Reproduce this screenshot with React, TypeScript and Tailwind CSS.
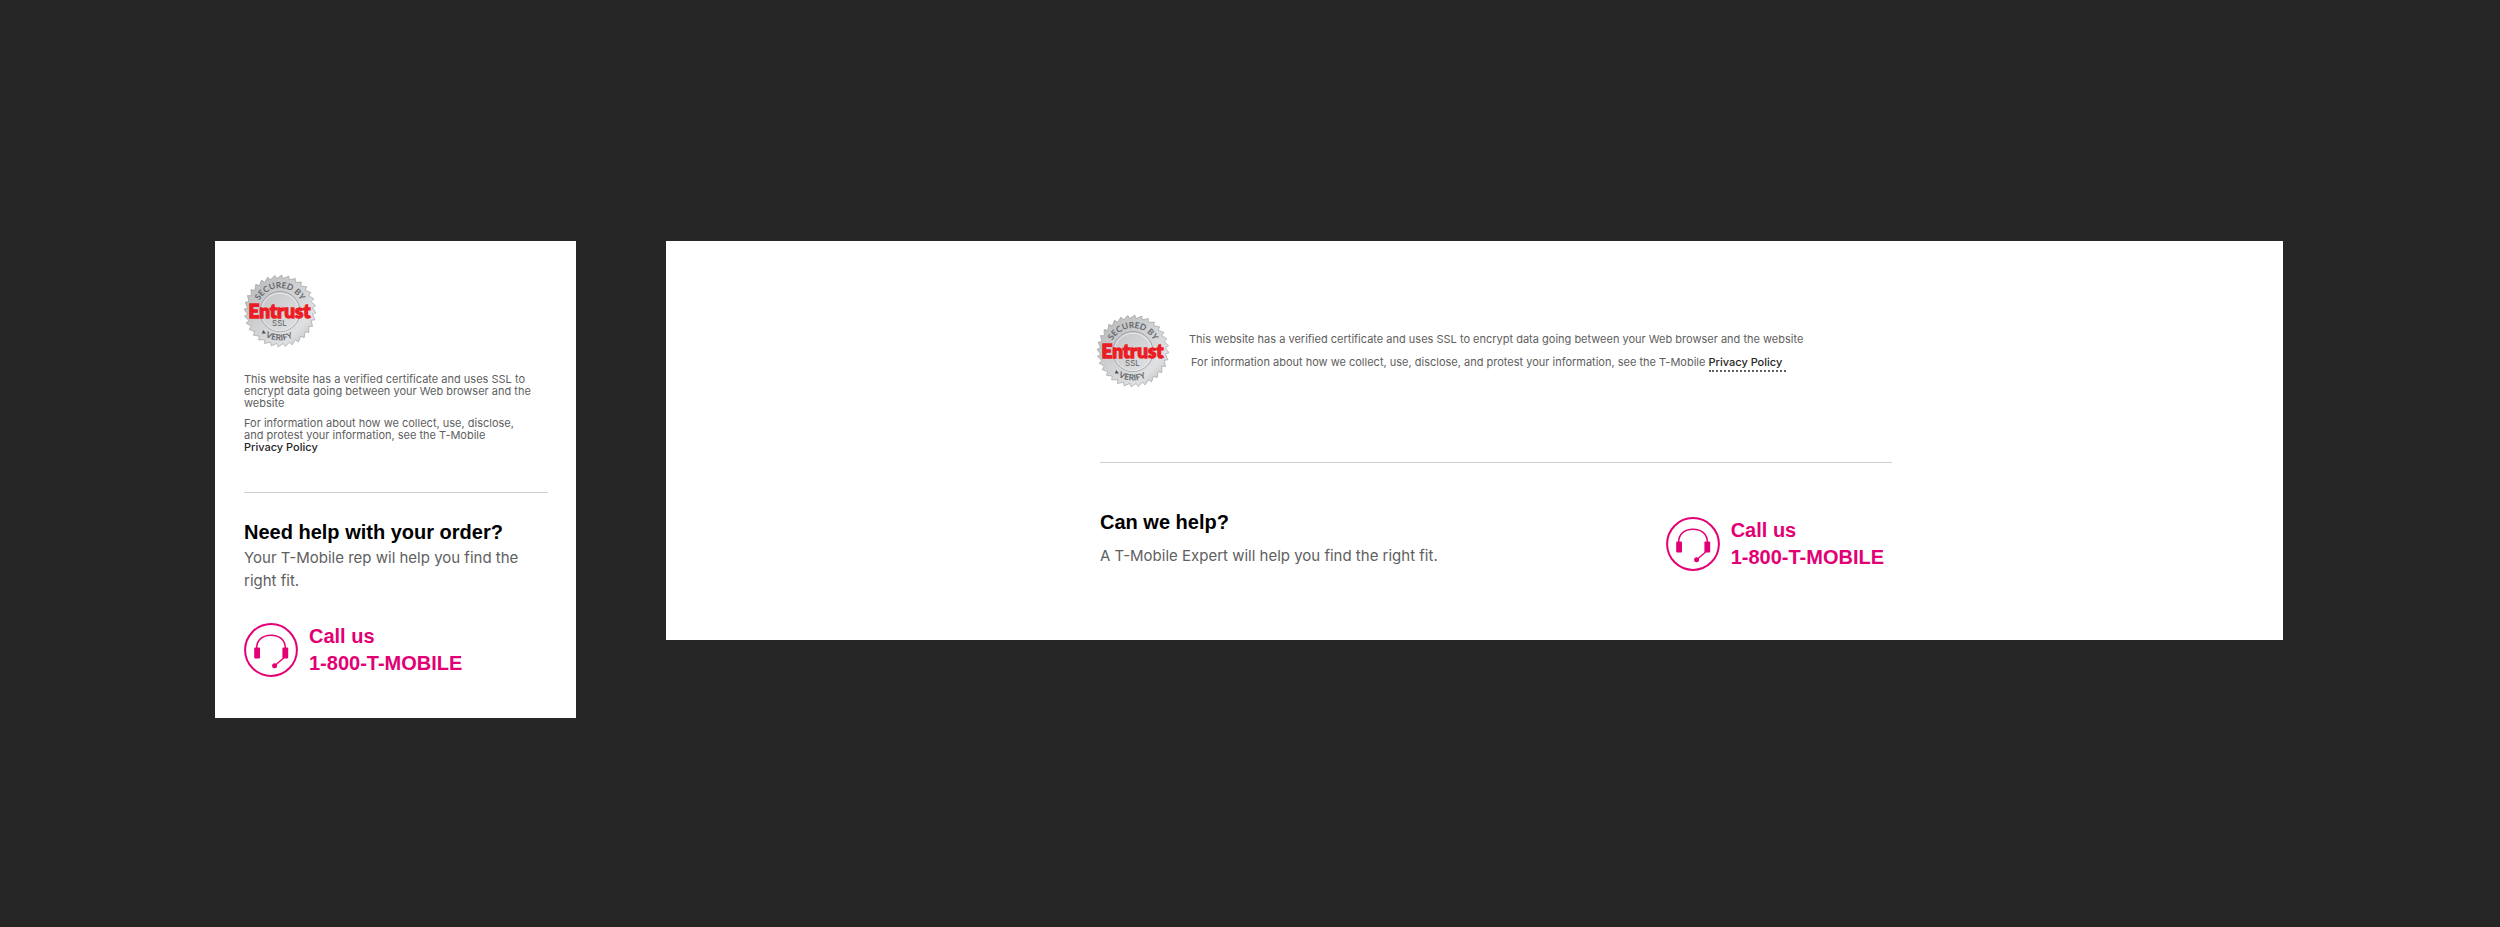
import React, { useId } from 'react';

const TEETH = 32;

// saw-tooth outline of the seal, drawn in a 72x72 box
const sealPoints = Array.from({ length: TEETH * 2 }, (_, i) => {
  const outer = i % 2 === 0;
  const angle = ((i + (outer ? 0.5 : 0)) * Math.PI) / TEETH;
  const radius = outer ? 36 : 32.6;
  return `${(36 + radius * Math.cos(angle)).toFixed(2)},${(36 + radius * Math.sin(angle)).toFixed(2)}`;
}).join(' ');

function EntrustSeal() {
  const id = useId();
  return (
    <svg viewBox="0 0 72 72" className="w-[72px] h-[72px] shrink-0 overflow-visible" role="img" aria-label="Secured by Entrust SSL">
      <defs>
        <linearGradient id={`${id}metal`} x1="0" y1="0" x2="1" y2="1">
          <stop offset="0" stopColor="#b4b6b8" />
          <stop offset="0.45" stopColor="#cfd1d3" />
          <stop offset="0.75" stopColor="#dfe0e2" />
          <stop offset="1" stopColor="#b4b6b8" />
        </linearGradient>
        <linearGradient id={`${id}inner`} x1="0" y1="0" x2="1" y2="1">
          <stop offset="0" stopColor="#c2c4c6" />
          <stop offset="1" stopColor="#e2e3e4" />
        </linearGradient>
        <path id={`${id}top`} d="M13 36a23 23 0 0 1 46 0" />
        <path id={`${id}bottom`} d="M6.5 36a29.5 29.5 0 0 0 59 0" />
      </defs>
      <polygon points={sealPoints} fill={`url(#${id}metal)`} stroke="#96989a" strokeWidth="0.6" />
      <circle cx="36" cy="36.5" r="20" fill={`url(#${id}inner)`} stroke="#a0a2a4" strokeWidth="1" />
      <circle cx="36" cy="37" r="18.8" fill="none" stroke="#f1f1f2" strokeWidth="0.8" />
      <text className="font-['Lato',sans-serif] font-bold" fontSize="8.4" fill="#66686b" textAnchor="middle">
        <textPath href={`#${id}top`} startOffset="50%">SECURED BY</textPath>
      </text>
      <text className="font-['Lato',sans-serif] font-bold" fontSize="8.4" fill="#66686b" textAnchor="middle">
        <textPath href={`#${id}bottom`} startOffset="49%">VERIFY</textPath>
      </text>
      <path d="M17.8 58.6l1.4-3.6 2.8 3.6z" fill="#505254" />
      <text x="35.5" y="42.5" className="font-['Lato',sans-serif] font-black" fontSize="19" fill="#ec1c24" stroke="#ec1c24" strokeWidth="1.3" textAnchor="middle">
        Entrust
      </text>
      <text x="35.5" y="51" className="font-['Inter',sans-serif]" fontSize="8" fill="#606264" textAnchor="middle">
        SSL
      </text>
    </svg>
  );
}

function HeadsetIcon() {
  return (
    <svg viewBox="0 0 54 54" className="w-[54px] h-[54px] shrink-0" fill="none" stroke="#e20074" aria-hidden="true">
      <circle cx="27" cy="27" r="25.9" strokeWidth="2" />
      <path d="M12.6 25.5C12.6 17 18.6 12.2 27 12.2s14.4 4.8 14.4 13.3" strokeWidth="1.5" />
      <rect x="10.2" y="24.6" width="5.8" height="11" rx="1" fill="#e20074" stroke="none" />
      <rect x="38.4" y="24.6" width="5.8" height="11" rx="1" fill="#e20074" stroke="none" />
      <path d="M40 34.8l-9.4 8" strokeWidth="1.4" />
      <circle cx="30.6" cy="42.7" r="2.5" fill="#e20074" stroke="none" />
    </svg>
  );
}

function CallUs() {
  return (
    <a href="tel:18008662453" className="flex items-center gap-[11px] text-[#e20074]">
      <HeadsetIcon />
      <span className="font-['Liberation_Sans',sans-serif] font-bold text-[20px] leading-[27px] whitespace-nowrap">
        Call us
        <br />
        1-800-T-MOBILE
      </span>
    </a>
  );
}

function MobileFooter() {
  return (
    <section className="w-[361px] shrink-0 bg-white pt-[34px] pb-[41px] pl-[29px] pr-7">
      <EntrustSeal />
      <div className="mt-[26px] space-y-2 pr-[14px] text-[11px] leading-[12px] text-[#606060]">
        <p>This website has a verified certificate and uses SSL to encrypt data going between your Web browser and the website</p>
        <p>
          For information about how we collect, use, disclose, and protest your information, see the T-Mobile{' '}
          <a href="#privacy" className="block font-medium text-[#262626]">Privacy Policy</a>
        </p>
      </div>
      <hr className="mt-[39px] border-[#d0d0d0]" />
      <h2 className="mt-[26px] font-['Liberation_Sans',sans-serif] text-[20px] leading-[27px] font-bold text-black">
        Need help with your order?
      </h2>
      <p className="text-[15px] leading-[23px] text-[#606060]">Your T-Mobile rep wil help you find the right fit.</p>
      <div className="mt-[31px]">
        <CallUs />
      </div>
    </section>
  );
}

function DesktopFooter() {
  return (
    <section className="flex-1 bg-white pt-[74px] pb-[69px] pl-10">
      <div className="mx-auto max-w-[795px]">
        <div className="flex gap-5">
          <EntrustSeal />
          <div className="pt-[13px] text-[11px] leading-[23px] text-[#606060]">
            <p>This website has a verified certificate and uses SSL to encrypt data going between your Web browser and the website</p>
            <p className="pl-0.5">
              For information about how we collect, use, disclose, and protest your information, see the T-Mobile{' '}
              <a href="#privacy" className="border-b-2 border-dotted border-[#606060] pb-px pr-1 font-medium text-[#262626]">Privacy Policy</a>
            </p>
          </div>
        </div>
        <div className="pl-[3px]">
          <hr className="mt-[75px] border-[#d0d0d0]" />
          <div className="flex justify-between pt-[46px] pr-2">
            <div>
              <h2 className="font-['Liberation_Sans',sans-serif] text-[20px] leading-[27px] font-bold text-black">Can we help?</h2>
              <p className="mt-2 text-[15px] leading-[23px] text-[#606060]">A T-Mobile Expert will help you find the right fit.</p>
            </div>
            <div className="pt-2">
              <CallUs />
            </div>
          </div>
        </div>
      </div>
    </section>
  );
}

export default function App() {
  return (
    <div className="min-h-screen bg-[#262626] pt-[241px] pl-[215px] pr-[217px] pb-20 font-['Inter',sans-serif]">
      <div className="flex items-start gap-[90px]">
        <MobileFooter />
        <DesktopFooter />
      </div>
    </div>
  );
}
